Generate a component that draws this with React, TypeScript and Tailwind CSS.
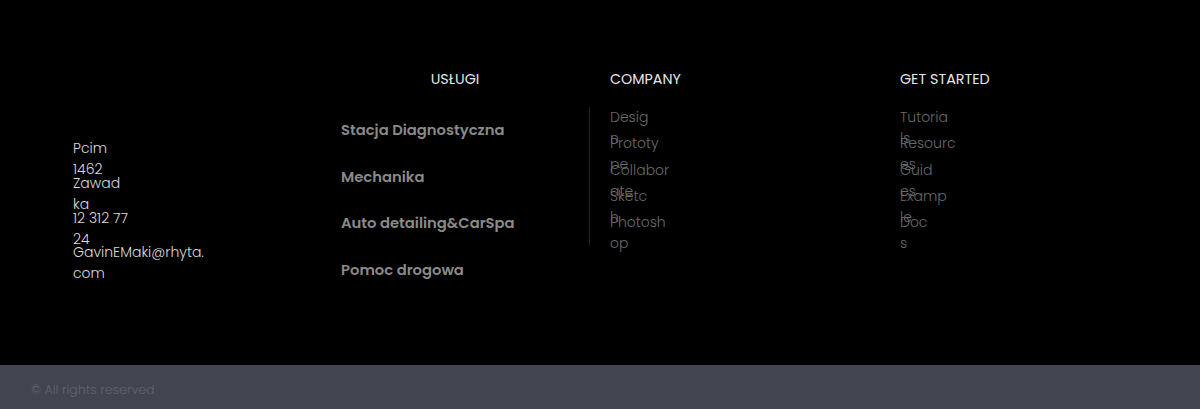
const contact = [["Pcim", "1462"], ["Zawad", "ka"], ["12 312 77", "24"], ["GavinEMaki@rhyta.", "com"]];

const services = ["Stacja Diagnostyczna", "Mechanika", "Auto detailing&CarSpa", "Pomoc drogowa"];

const company = [["Desig", "n"], ["Prototy", "pe"], ["Collabor", "ate"], ["Sketc", "h"], ["Photosh", "op"]];

const started = [["Tutoria", "ls"], ["Resourc", "es"], ["Guid", "es"], ["Examp", "le"], ["Doc", "s"]];

function Cell({ lines }: { lines: string[] }) {
  return (
    <li className="h-[21px] leading-[21px]">
      {lines.map((l) => (
        <span key={l} className="block whitespace-nowrap">
          {l}
        </span>
      ))}
    </li>
  );
}

export default function App() {
  return (
    <div className="w-[1200px] font-['Poppins','Inter','Liberation_Sans',sans-serif]">
      <footer className="bg-black h-[365px] flex pl-[73px] pt-[69px]">
        <div className="w-[268px] pt-[69px]">
          <ul className="flex flex-col gap-[13.8px] text-[14px] font-light text-[#dadada]">
            {contact.map((c) => (
              <Cell key={c[0]} lines={c} />
            ))}
          </ul>
        </div>

        <div className="w-[228px]">
          <h4 className="text-center text-[14.3px] leading-[21px] text-[#e6e6e6] uppercase">Usługi</h4>
          <ul className="mt-[29px] flex flex-col gap-[24.7px]">
            {services.map((s) => (
              <li key={s} className="text-[14.75px] leading-[22px] font-semibold text-[#8a8a8a] whitespace-nowrap">
                {s}
              </li>
            ))}
          </ul>
        </div>

        <div className="ml-[20px] w-[311px]">
          <h4 className="pl-[21px] text-[14.3px] leading-[21px] text-[#e6e6e6]">COMPANY</h4>
          <ul className="mt-[17px] border-l border-[#222] pl-[20px] pb-[13px] flex flex-col gap-[5.3px] text-[14px] font-light text-[#6a6a6a]">
            {company.map((c) => (
              <Cell key={c[0]} lines={c} />
            ))}
          </ul>
        </div>

        <div>
          <h4 className="text-[14.3px] leading-[21px] text-[#e6e6e6]">GET STARTED</h4>
          <ul className="mt-[17px] flex flex-col gap-[5.3px] text-[14px] font-light text-[#6a6a6a]">
            {started.map((c) => (
              <Cell key={c[0]} lines={c} />
            ))}
          </ul>
        </div>
      </footer>

      <div className="bg-[#42454f] h-[44px] flex items-center pl-[31px] pt-[7px]">
        <p className="text-[12.6px] font-light text-[#60646c]">© All rights reserved</p>
      </div>
    </div>
  );
}
